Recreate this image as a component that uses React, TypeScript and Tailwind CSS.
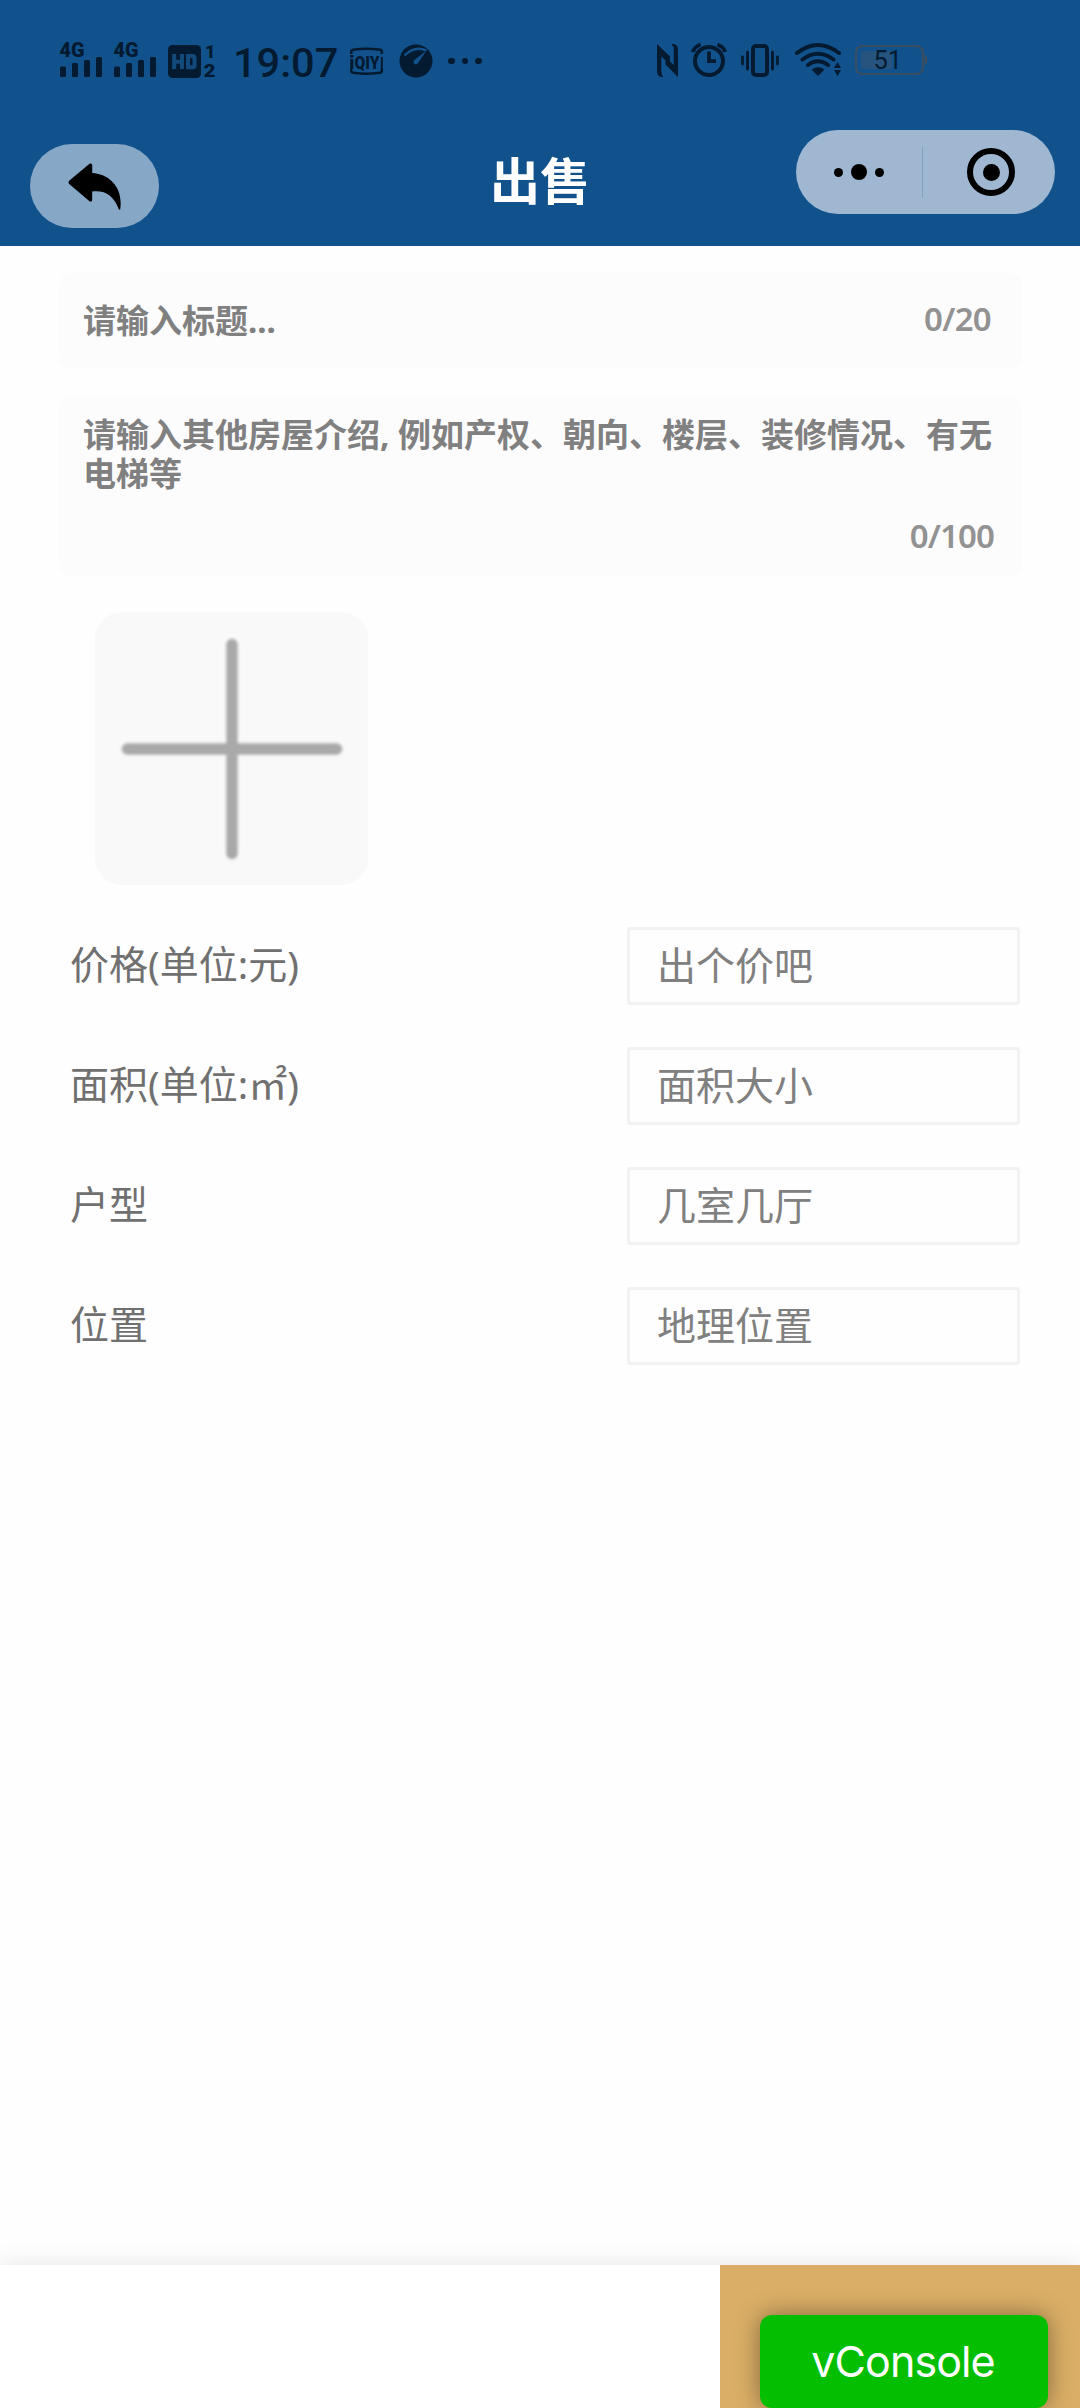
import React from "react";

const INK = "#031a30";
const SKY = "#11528d";

function Signal() {
  return (
    <svg className="w-[54px] h-[60px]" viewBox="58 30 54 60" fill={INK}>
      <text x="59.5" y="55.5" fontFamily="Roboto" fontWeight="900" fontSize="20" textLength="25" lengthAdjust="spacingAndGlyphs">4G</text>
      <rect x="60" y="65.5" width="6" height="10.5" rx="1.5" />
      <rect x="72" y="62" width="6" height="14" rx="1.5" />
      <rect x="84" y="59" width="6" height="17" rx="1.5" />
      <rect x="96" y="56" width="6" height="20" rx="1.5" />
    </svg>
  );
}

function HdBadge() {
  return (
    <svg className="w-[62px] h-[60px]" viewBox="166 30 62 60" fill={INK}>
      <rect x="168" y="44" width="33" height="33" rx="4.5" />
      <g fill="none" stroke="#134a7c" strokeWidth="4">
        <path d="M174.2 53v15M182 53v15M174.2 60.7h8" />
        <path d="M188 55h4.5q2 0 2 2v7.200q0 2-2 2H188z" />
      </g>
      <text x="205" y="57" fontFamily="Roboto" fontWeight="900" fontSize="18">1</text>
      <text x="203.500" y="76" fontFamily="Roboto" fontWeight="900" fontSize="19" textLength="12" lengthAdjust="spacingAndGlyphs">2</text>
    </svg>
  );
}

function VideoApp() {
  return (
    <svg className="w-[34px] h-[40px]" viewBox="350 41 34 40" fill={INK}>
      <g fill="none" stroke={INK} strokeWidth="2.600">
        <path d="M351.200 54v-2.500q0-1.500 2-1.800q13.300-1.800 26.600 0q2 .3 2 1.800V54M351.200 69v2q0 1.500 2 1.800q13.300 1.800 26.600 0q2-.3 2-1.800v-2" />
        <path d="M351.800 59v10" strokeWidth="3" />
        <path d="M381.800 57v12" strokeWidth="2" />
      </g>
      <rect x="350" y="55" width="3.500" height="2.500" />
      <text x="354.500" y="68.500" fontFamily="Roboto" fontWeight="900" fontSize="19" textLength="25" lengthAdjust="spacingAndGlyphs">QIY</text>
    </svg>
  );
}

function Gauge() {
  return (
    <svg className="w-[34px] h-[34px]" viewBox="0 0 34 34">
      <circle cx="17" cy="17" r="16.500" fill={INK} />
      <path d="M5.500 11.500Q16 1.500 27.500 6.500" fill="none" stroke={SKY} strokeWidth="2.400" />
      <path d="M27.500 6.500L18.500 19.800a2.500 2.500 0 0 1-3.700-3.200z" fill={SKY} />
    </svg>
  );
}

function StatusIcons() {
  return (
    <div className="flex items-center">
      <svg className="w-[34px] h-[40px]" viewBox="656 42 34 40" fill={INK}>
        <path d="M657 45l13 12.500V65.500L661.300 57.500v14.500q0 4 2.200 6h-2.500q-4-1-4-6z" />
        <path d="M678 78l-12.500-12.500v-7.700l8.200 8.200V51q0-4-2.200-6h2.500q4 1 4 5.500z" />
      </svg>
      <svg className="w-[50px] h-[40px]" viewBox="690 42 50 40" fill="none" stroke={INK}>
        <circle cx="709" cy="62" r="14" strokeWidth="4" />
        <path d="M709 52.500v9.700h7" strokeWidth="3.800" />
        <path d="M693 53q1-5 7.500-7.500M725 53q-1-5-7.500-7.500" strokeWidth="3.800" />
      </svg>
      <svg className="w-[54px] h-[40px]" viewBox="740 42 54 40" fill="none" stroke={INK} strokeWidth="4">
        <rect x="753" y="47" width="14" height="29" rx="3" />
        <path d="M747.500 53v17M772.500 53v17" strokeWidth="3" strokeLinecap="round" />
        <path d="M742.500 58v7M777.500 58v7" strokeWidth="2.800" strokeLinecap="round" />
      </svg>
      <svg className="w-[60px] h-[40px]" viewBox="794 42 60 40" fill="none" stroke={INK} strokeWidth="4" strokeLinecap="round">
        <path d="M797 54q21-16 42 0M802.500 60.500q15.500-11.500 31 0M808 66q10-7.500 20 0" />
        <path d="M811.500 70.500q6.500-4.500 13 0L818 77z" fill={INK} stroke="none" />
        <path d="M834 69l3.500-6 3.500 6zM834 71l3.500 6 3.500-6z" fill={INK} stroke="none" />
      </svg>
      <svg className="w-[74px] h-[40px]" viewBox="854 42 74 40">
        <rect x="861" y="52" width="31" height="18" rx="2" fill="#26547e" />
        <rect x="856" y="47" width="67" height="28" rx="6.500" fill="none" stroke="#384f62" strokeWidth="2.200" />
        <path d="M924.500 55.500q3 1.500 3 5.500t-3 5.500z" fill="#384f62" />
        <text x="873.500" y="70" fontFamily="Roboto" fontSize="25.500" fill={INK}>51</text>
      </svg>
    </div>
  );
}

function Header() {
  return (
    <header className="relative h-[246px] bg-[#11528d]">
      <div className="flex h-[122px] items-center justify-between pl-[58px] pr-[152px]">
        <div className="flex items-center">
          <Signal />
          <Signal />
          <HdBadge />
          <span className="ml-[5px] w-[107px] pt-[4px] font-['Roboto'] text-[41.500px] leading-none font-medium whitespace-nowrap text-[#031a30]">19:07</span>
          <span className="ml-[10px] flex"><VideoApp /></span>
          <span className="ml-[15px] flex"><Gauge /></span>
          <span className="ml-[15px] flex gap-[7px]">
            <i className="size-[6.500px] rounded-full bg-[#031a30]" />
            <i className="size-[6.500px] rounded-full bg-[#031a30]" />
            <i className="size-[6.500px] rounded-full bg-[#031a30]" />
          </span>
        </div>
        <StatusIcons />
      </div>
      <div className="grid grid-cols-[1fr_auto_1fr] items-start pl-[30px] pr-[25px]">
        <button className="mt-[22px] flex h-[84px] w-[129px] items-center justify-center rounded-full bg-[#87a7c7]">
          <svg className="h-[47px] w-[53px]" viewBox="68 163.500 53 47" fill="#000">
            <path d="M69.200 181.300L89.500 164.300q2.700-1.200 2.700 1.500v7.700c16 .8 31.500 13.500 28 36.500q-.8.800-1.500-.5c-5-13-13-19-26.500-17.500v8.500q0 2.200-2.700 1.200L69.200 184.500q-1.400-1.600 0-3.200z" />
          </svg>
        </button>
        <h1 className="mt-[20px] ml-[-5px] font-['Noto_Sans_CJK_SC',sans-serif] text-[50px] leading-[72px] font-bold text-white">出售</h1>
        <div className="mt-[8px] flex h-[84px] w-[259px] items-center justify-self-end rounded-full bg-[#9fb7d1]">
          <div className="flex h-full flex-1 items-center justify-center gap-[8px]">
            <i className="size-[9px] rounded-full bg-black" />
            <i className="size-[16px] rounded-full bg-black" />
            <i className="size-[9px] rounded-full bg-black" />
          </div>
          <div className="h-[51px] w-px bg-[#83a1c1]" />
          <div className="flex h-full flex-1 items-center justify-center pr-[1px] pl-[6px]">
            <div className="flex size-[48px] items-center justify-center rounded-full border-[6.500px] border-black">
              <i className="size-[17px] rounded-full bg-black" />
            </div>
          </div>
        </div>
      </div>
    </header>
  );
}

const fields = [
  { label: "价格(单位:元)", hint: "出个价吧" },
  { label: "面积(单位:㎡)", hint: "面积大小" },
  { label: "户型", hint: "几室几厅" },
  { label: "位置", hint: "地理位置" },
];

export default function App() {
  return (
    <div className="flex h-[2408px] w-[1080px] flex-col overflow-hidden bg-[#fefefe] font-['Noto_Sans','Noto_Sans_CJK_SC',sans-serif]">
      <Header />
      <main className="flex-1 pt-[27px]">
        <section className="mr-[58px] ml-[59px] flex h-[96px] justify-between rounded-[12px] bg-[#fcfcfc] pr-[31px] pl-[24px] text-[33px] leading-[39px]">
          <p className="mt-[28px] font-bold text-[#808080]">请输入标题...</p>
          <p className="mt-[26px] font-semibold tracking-[-0.7px] text-[#929292]">0/20</p>
        </section>
        <section className="mt-[27px] mr-[58px] ml-[59px] flex h-[180px] flex-col justify-between rounded-[12px] bg-[#fcfcfc] pr-[28px] pb-[21px] pl-[24px] text-[33px] leading-[39px]">
          <p className="mt-[19px] w-[911px] font-bold whitespace-nowrap text-[#808080]">
            请输入其他房屋介绍, 例如产权、朝向、楼层、装修情况、有无
            <br />
            电梯等
          </p>
          <p className="text-right font-semibold tracking-[-0.9px] text-[#929292]">0/100</p>
        </section>
        <button className="mt-[36px] ml-[95px] flex size-[273px] items-center justify-center rounded-[27px] bg-[#f9f9f9]">
          <svg className="size-[240px] blur-[1.500px]" viewBox="0 0 240 240" stroke="#a9a9a9" strokeWidth="11.500" strokeLinecap="round">
            <path d="M120 15.500v209M15.500 120h209" />
          </svg>
        </button>
        <section className="mt-[42px] flex flex-col gap-[42px] pr-[60px] pl-[70px]">
          {fields.map((f) => (
            <div key={f.label} className="flex h-[78px] items-center justify-between text-[39px] leading-[54px]">
              <span className="pb-[4px] text-[#707070]">{f.label}</span>
              <span className="flex h-[78px] w-[393px] items-center rounded-[3px] border-[3px] border-[#f2f2f2] pb-[2px] pl-[27px] text-[#808080]">{f.hint}</span>
            </div>
          ))}
        </section>
      </main>
      <footer className="flex h-[143px] justify-end bg-white shadow-[0_0_24px_rgba(0,0,0,0.1)]">
        <div className="flex w-[360px] items-start bg-[#daae66] pt-[50px] pl-[40px]">
          <button className="h-[93px] w-[288px] rounded-[12px] bg-[#04be02] pr-[2px] font-['Inter'] text-[43px] leading-[93px] font-normal tracking-[-0.9px] text-white shadow-[0_0_24px_rgba(0,0,0,0.4)]">vConsole</button>
        </div>
      </footer>
    </div>
  );
}
